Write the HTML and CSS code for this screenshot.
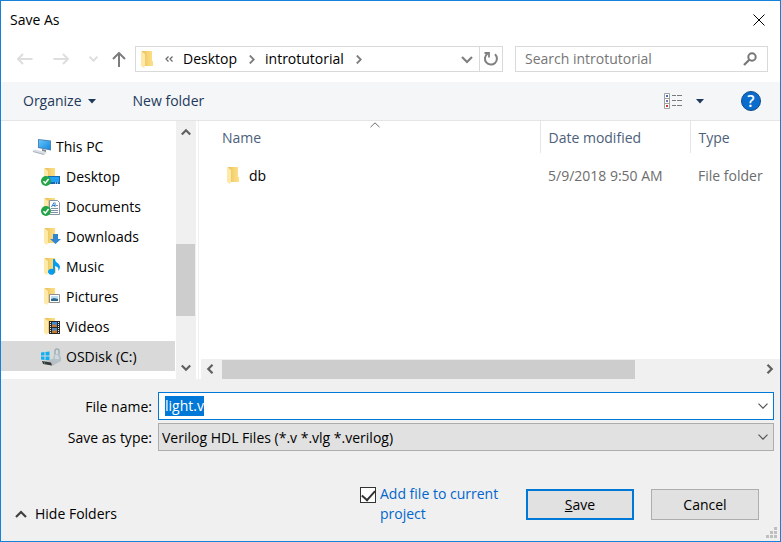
FILE: index.html
```html
<!DOCTYPE html>
<html lang="en">
<head>
<meta charset="utf-8">
<title>Save As</title>
<link rel="stylesheet" href="styles.css">
</head>
<body>
<svg class="defs" aria-hidden="true">
  <linearGradient id="fold" x1="0" x2="1"><stop offset="0" stop-color="#e8bd5c"/><stop offset=".5" stop-color="#f5d475"/><stop offset="1" stop-color="#ffe086"/></linearGradient>
  <linearGradient id="screen" x1="0" y1="0" x2="1" y2="1"><stop offset="0" stop-color="#63c6fb"/><stop offset="1" stop-color="#1488e0"/></linearGradient>
  <symbol id="folder" viewBox="0 0 12 17"><path d="M1 0h10v10h1v5H3z" fill="url(#fold)"/><path d="M0 0l4 3v12l-1 2-3-2z" fill="#ffe9a8"/></symbol>
  <symbol id="ok" viewBox="0 0 10 10"><circle cx="5" cy="5" r="5" fill="#22a447"/><path d="M2.500 5.200l1.800 2L7.600 3" fill="none" stroke="#fff" stroke-width="1.500"/></symbol>
</svg>
<form class="dialog">
  <header class="titlebar">
    <h1>Save As</h1>
    <button type="button" class="close" aria-label="Close"><svg width="12" height="12" viewBox="0 0 12 12"><path d="M.5.500l11 11M11.500.500l-11 11" stroke="#000" fill="none"/></svg></button>
  </header>

  <nav class="navbar" aria-label="Location">
    <div class="history">
      <button type="button" aria-label="Back" disabled><svg width="16" height="12" viewBox="0 0 16 12"><path d="M15.500 6H1M6 1L1 6l5 5" fill="none" stroke="#dedede" stroke-width="2"/></svg></button>
      <button type="button" aria-label="Forward" disabled><svg width="16" height="12" viewBox="0 0 16 12"><path d="M.5 6H15M10 1l5 5-5 5" fill="none" stroke="#dedede" stroke-width="2"/></svg></button>
      <button type="button" aria-label="Recent locations" disabled><svg width="9" height="6" viewBox="0 0 9 6"><path d="M.5.700l4 4 4-4" fill="none" stroke="#dedede" stroke-width="2"/></svg></button>
      <button type="button" aria-label="Up"><svg width="14" height="15" viewBox="0 0 14 15"><path d="M7 15V1M1 7l6-6 6 6" fill="none" stroke="#7c7c7c" stroke-width="2"/></svg></button>
    </div>
    <div class="address">
      <svg class="folder" width="12" height="17"><use href="#folder"/></svg>
      <svg class="more" width="9" height="6" viewBox="0 0 9 6"><path d="M3.500.500L1 3l2.500 2.500M7.500.500L5 3l2.500 2.500" fill="none" stroke="#666" stroke-width="1.200"/></svg>
      <a href="#">Desktop</a>
      <svg class="sep" width="6" height="9" viewBox="0 0 6 9"><path d="M.8.500l4 4-4 4" fill="none" stroke="#7c7c7c" stroke-width="1.800"/></svg>
      <a href="#">introtutorial</a>
      <svg class="sep" width="6" height="9" viewBox="0 0 6 9"><path d="M.8.500l4 4-4 4" fill="none" stroke="#7c7c7c" stroke-width="1.800"/></svg>
      <button type="button" class="drop" aria-label="Previous locations"><svg width="12" height="8" viewBox="0 0 12 8"><path d="M1 1l5 5 5-5" fill="none" stroke="#808080" stroke-width="2.200"/></svg></button>
      <button type="button" class="refresh" aria-label="Refresh"><svg width="16" height="16" viewBox="0 0 16 16"><path d="M12 3.200A6 6 0 1 1 4.500 2.700" fill="none" stroke="#808080" stroke-width="2"/><path d="M1.500 2H6v4.500" fill="none" stroke="#808080" stroke-width="1.800"/></svg></button>
    </div>
    <div class="search">
      <input type="text" placeholder="Search introtutorial" aria-label="Search introtutorial">
      <svg width="14" height="14" viewBox="0 0 14 14"><circle cx="9" cy="5" r="3.700" fill="none" stroke="#777" stroke-width="2"/><path d="M6.300 7.700L1 13" stroke="#777" stroke-width="2.200"/></svg>
    </div>
  </nav>

  <div class="toolbar">
    <button type="button">Organize <svg width="8" height="5" viewBox="0 0 8 5"><path d="M0 0h8L4 4.500z" fill="#1e395b"/></svg></button>
    <button type="button">New folder</button>
    <button type="button" class="view" aria-label="Change your view">
      <svg width="18" height="16" viewBox="0 0 18 16"><path d="M.5.500h5v15h-5zM.5 5.500h5M.5 10.500h5" fill="#fff" stroke="#a0a0a0"/><path d="M8 2.500h4m1 0h5M8 7.500h4m1 0h5M8 12.500h4m1 0h5" stroke="#7a7a7a"/><path d="M2 2h2v2H2z" fill="#3b6fb6"/><path d="M2 7h2v2H2z" fill="#7777a5"/><path d="M2 12h2v2H2z" fill="#c2402b"/></svg>
      <svg width="8" height="5" viewBox="0 0 8 5"><path d="M0 0h8L4 4.500z" fill="#1e395b"/></svg>
    </button>
    <button type="button" class="help" aria-label="Help">?</button>
  </div>

  <div class="browser">
    <ul class="tree">
      <li class="root"><svg width="20" height="18" viewBox="0 0 20 18"><path d="M6 1l13 1.500v10L6 10z" fill="#4c86b8"/><path d="M7 2l11 1.500v8L7 9z" fill="url(#screen)"/><path d="M10 11l4 1v2l-4-1z" fill="#7c8894"/><path d="M0 13l3-1.500 12 3L12 17z" fill="#d9dee3"/><path d="M1 13.500l11 3" stroke="#aab2ba"/></svg>This PC</li>
      <li><svg width="20" height="18" viewBox="0 0 20 18"><use href="#folder" x="3" y="0" width="12" height="17"/><path d="M7 8h12v8H7z" fill="#1268b3"/><path d="M8 9h10v5H8z" fill="#21a0f4"/><path d="M14 15h1m1 0h1" stroke="#fff"/><use href="#ok" y="8" width="10" height="10"/></svg>Desktop</li>
      <li><svg width="20" height="18" viewBox="0 0 20 18"><use href="#folder" x="3" y="0" width="12" height="17"/><path d="M8.500 2.500h8l2 2v12h-10z" fill="#fff" stroke="#8796a5"/><path d="M10.500 9L13 4.500M14 4.500V9M11.500 7.500H14" stroke="#277bc0"/><path d="M15 7.500h2M10 10.500h7M10 12.500h7M10 14.500h7" stroke="#7f91a2"/><use href="#ok" y="8" width="10" height="10"/></svg>Documents</li>
      <li><svg width="20" height="18" viewBox="0 0 20 18"><use href="#folder" x="3" y="0" width="12" height="17"/><path d="M12 6h5v5h3l-5.500 5L9 11h3z" fill="#3186d2"/></svg>Downloads</li>
      <li><svg width="20" height="18" viewBox="0 0 20 18"><use href="#folder" x="3" y="0" width="12" height="17"/><path d="M12 1h2c0 4 5 4 5 8 0 2-1 3-2 4 1-3 0-4-3-5v6a3.500 3 0 1 1-2-3z" fill="#089cf0"/></svg>Music</li>
      <li><svg width="20" height="18" viewBox="0 0 20 18"><use href="#folder" x="3" y="0" width="12" height="17"/><path d="M8.500 6.500h10v8h-10z" fill="#fff" stroke="#8c9094"/><path d="M10 8h7v5h-7z" fill="#b9def7"/><path d="M10 11l3-1 4 1v2h-7z" fill="#2e6b8a"/></svg>Pictures</li>
      <li><svg width="20" height="18" viewBox="0 0 20 18"><use href="#folder" x="3" y="0" width="12" height="17"/><path d="M8 3h11v13H8z" fill="#282828"/><path d="M11 4h5v5h-5z" fill="#4289d8"/><path d="M11 10h5v5h-5z" fill="#5487c0"/><path d="M11 7l2-1 3 2v1h-5zM11 13l3-1 2 1v2h-5z" fill="#bb7a35"/><path d="M9.500 4v12M17.500 4v12" stroke="#eee" stroke-dasharray="1 1"/></svg>Videos</li>
      <li class="selected"><svg width="20" height="18" viewBox="0 0 20 18"><path d="M0 4.500l3.500-.5v3.500H0zM4.500 4l4-.5v4h-4zM0 8.500h3.500V12L0 11.500zM4.500 8.500h4v4l-4-.5z" fill="#11aef0"/><path d="M2 14l9-3 9-2v4l-9 5z" fill="#b9bfc3"/><path d="M1 13l9 1.500 1 3-9-1.500z" fill="#34383b"/><path d="M13 6h6l1 6-4 3-4-2z" fill="#b4c2ca"/><path d="M14 6V3a2 2 0 0 1 4 0v3" fill="none" stroke="#9badb7" stroke-width="1.500"/><path d="M14 8h3M14 10h4" stroke="#e8f0f4"/><path d="M3 15h1" stroke="#43d96a"/></svg>OSDisk (C:)</li>
    </ul>
    <div class="vscroll" aria-hidden="true">
      <svg width="10" height="8" viewBox="0 0 10 8"><path d="M.8 6.500L5 2.300l4.200 4.200" fill="none" stroke="#606060" stroke-width="2.200"/></svg>
      <div class="track"><div class="thumb"></div></div>
      <svg width="10" height="8" viewBox="0 0 10 8"><path d="M.8 1.500L5 5.700l4.200-4.200" fill="none" stroke="#606060" stroke-width="2.200"/></svg>
    </div>
    <div class="listing">
      <table>
        <thead>
          <tr><th class="name">Name<svg class="sort" width="10" height="6" viewBox="0 0 10 6"><path d="M.5 5.200L5 .8l4.500 4.400" fill="none" stroke="#6a6a6a"/></svg></th><th class="date">Date modified</th><th class="type">Type</th></tr>
        </thead>
        <tbody>
          <tr><td class="name"><svg width="12" height="17"><use href="#folder"/></svg>db</td><td class="date">5/9/2018 9:50 AM</td><td class="type">File folder</td></tr>
        </tbody>
      </table>
      <div class="hscroll" aria-hidden="true">
        <svg width="8" height="10" viewBox="0 0 8 10"><path d="M6.500.800L2.300 5l4.200 4.200" fill="none" stroke="#606060" stroke-width="2.200"/></svg>
        <div class="track"><div class="thumb"></div></div>
        <svg width="8" height="10" viewBox="0 0 8 10"><path d="M1.500.800L5.700 5 1.500 9.200" fill="none" stroke="#606060" stroke-width="2.200"/></svg>
      </div>
    </div>
  </div>

  <div class="fields">
    <label for="filename">File name:</label>
    <div class="combo editable">
      <input id="filename" type="text" value="light.v" autocomplete="off" spellcheck="false">
      <svg width="10" height="6" viewBox="0 0 10 6"><path d="M.5.700L5 5.200 9.500.700" fill="none" stroke="#555" stroke-width="1.200"/></svg>
    </div>
    <label for="filetype">Save as type:</label>
    <div class="combo">
      <select id="filetype"><option>Verilog HDL Files (*.v *.vlg *.verilog)</option></select>
      <svg width="10" height="6" viewBox="0 0 10 6"><path d="M.5.700L5 5.200 9.500.700" fill="none" stroke="#555" stroke-width="1.200"/></svg>
    </div>
  </div>

  <footer class="actions">
    <button type="button" class="hide"><svg width="12" height="8" viewBox="0 0 12 8"><path d="M1 7l5-5 5 5" fill="none" stroke="#404040" stroke-width="2.200"/></svg>Hide Folders</button>
    <div class="option">
      <input type="checkbox" id="addfile" checked>
      <label for="addfile">Add file to current project</label>
    </div>
    <button type="submit" class="push primary"><u>S</u>ave</button>
    <button type="button" class="push">Cancel</button>
    <svg class="grip" width="11" height="11" viewBox="0 0 11 11"><path d="M8 0h3v3H8zM4 4h3v3H4zM8 4h3v3H8zM0 8h3v3H0zM4 8h3v3H4zM8 8h3v3H8z" fill="#bfbfbf"/></svg>
  </footer>
</form>
<script src="dialog.js"></script>
</body>
</html>
```
FILE: dialog.js
```js
const filename = document.getElementById('filename');
filename.focus();
filename.select();
```
FILE: styles.css
```css
* { box-sizing: border-box; }
body {
  margin: 0;
  font: 14px/20px "Open Sans", "Noto Sans", sans-serif;
  color: #000;
}
button, input, select { font: inherit; color: inherit; }
button { padding: 0; border: 0; background: none; }
svg { display: block; flex: none; }
.defs { position: absolute; width: 0; height: 0; }

.dialog {
  display: flex;
  flex-direction: column;
  min-height: 100vh;
  border: 1px solid #1581d8;
  background: #f0f0f0;
}

.titlebar {
  display: flex;
  align-items: center;
  justify-content: space-between;
  height: 37px;
  padding: 0 15px 0 9px;
  background: #fff;
}
.titlebar h1 { margin: 0; font-size: 14px; font-weight: 400; }

.navbar {
  display: flex;
  align-items: center;
  gap: 12px;
  padding: 8px 12px 10px 16px;
  background: #fff;
}
.history { display: flex; align-items: center; gap: 20px; margin-right: -3px; }
.history button:last-child { margin-left: -6px; }
.address, .search {
  display: flex;
  align-items: center;
  height: 26px;
  border: 1px solid #d9d9d9;
}
.address { flex: 1; padding-left: 5px; }
.address a { color: inherit; text-decoration: none; }
.address .more { margin: 0 9px 0 12px; }
.address .sep { margin: 0 10px 0 12px; }
.address .drop { margin-left: auto; padding: 2px 6px 0; }
.refresh { height: 24px; padding: 0 3px; border-left: 1px solid #d9d9d9; }
.search { width: 253px; padding: 0 10px 0 9px; }
.search input { flex: 1; min-width: 0; padding: 0; border: 0; outline: 0; background: none; }
.search input::placeholder { color: #767676; opacity: 1; }

.toolbar {
  display: flex;
  align-items: center;
  height: 39px;
  padding: 0 19px 0 22px;
  border-bottom: 1px solid #e5e5e5;
  background: #f4f6f8;
  color: #1e395b;
}
.toolbar button { display: flex; align-items: center; gap: 6px; margin-right: 37px; }
.toolbar .view { gap: 14px; margin-left: auto; }
.toolbar .help {
  justify-content: center;
  width: 20px;
  height: 20px;
  margin-right: 0;
  border: 1px solid #124a86;
  border-radius: 50%;
  background: #0a6ccc;
  color: #fff;
  font-size: 16px;
  font-weight: 600;
}

.browser { display: flex; height: 258px; background: #fff; }
.tree { width: 174px; margin: 0; padding: 10px 0 0; list-style: none; }
.tree li { display: flex; align-items: center; gap: 5px; height: 30px; padding: 1px 0 0 40px; white-space: nowrap; }
.tree .root { gap: 4px; padding-left: 31px; }
.tree .selected { background: #d9d9d9; }

.vscroll {
  display: flex;
  flex-direction: column;
  align-items: center;
  justify-content: space-between;
  width: 20px;
  margin-left: 1px;
  padding: 7px 1px 7px 0;
  background: #f0f0f0;
}
.vscroll .track { flex: 1; width: 100%; padding-top: 108px; }
.vscroll .thumb { height: 72px; background: #cdcdcd; }

.listing {
  display: flex;
  flex: 1;
  flex-direction: column;
  justify-content: space-between;
  margin-left: 2px;
  padding-left: 2px;
  border-left: 1px solid #f0f0f0;
}
table { width: 100%; table-layout: fixed; border-collapse: collapse; }
th, td { padding: 2px 0 0 8px; font-weight: 400; text-align: left; }
th { height: 32px; border-right: 1px solid #e5e5e5; color: #4c607a; }
th.type { border-right: 0; }
td { height: 44px; color: #6d6d6d; }
th.name { position: relative; padding-left: 21px; }
td.name { padding-left: 26px; color: #000; }
td.name svg { display: inline-block; margin: -4px 10px 0 0; vertical-align: middle; }
.date { width: 150px; }
.type { width: 90px; }
.sort { position: absolute; top: 1px; left: 50%; }
.hscroll { display: flex; align-items: center; gap: 8px; height: 20px; padding: 0 6px 0 5px; background: #f0f0f0; }
.hscroll .track { flex: 1; }
.hscroll .thumb { width: 77%; height: 19px; background: #cdcdcd; }

.fields {
  display: grid;
  grid-template-columns: 151px 1fr;
  align-items: center;
  gap: 3px 6px;
  padding: 13px 6px 0 0;
}
.fields label { padding-top: 1px; text-align: right; }
.combo {
  position: relative;
  display: flex;
  align-items: center;
  height: 28px;
  border: 1px solid #adadad;
  background: #e1e1e1;
}
.combo.editable { border-color: #0078d7; background: #fff; }
.combo input, .combo select {
  flex: 1;
  min-width: 0;
  padding: 1px 24px 0 3px;
  border: 0;
  outline: 0;
  background: none;
  appearance: none;
}
.combo input { padding: 0 24px 0 6px; }
.combo svg { position: absolute; right: 5px; pointer-events: none; }
::selection { background: #0078d7; color: #fff; }

.actions {
  position: relative;
  display: flex;
  align-items: flex-start;
  flex: 1;
  padding: 33px 21px 0 14px;
}
.hide { display: flex; align-items: center; gap: 8px; margin-top: 20px; }
.option { display: flex; gap: 4px; width: 150px; margin-left: auto; }
.option label { color: #0066cc; }
.option input {
  display: grid;
  place-items: center;
  flex: none;
  width: 16px;
  height: 16px;
  margin: 3px 0 0;
  padding-bottom: 3px;
  border: 1px solid #333;
  background: #fff;
  appearance: none;
}
.option input:checked::after {
  content: "";
  width: 11px;
  height: 6px;
  border: solid #333;
  border-width: 0 0 2px 2px;
  transform: rotate(-48deg);
}
.push { width: 108px; height: 31px; margin: 5px 0 0 17px; border: 1px solid #adadad; background: #e1e1e1; }
.push.primary { margin-left: 16px; border: 2px solid #0078d7; }
.grip { position: absolute; right: 3px; bottom: 3px; }
```
